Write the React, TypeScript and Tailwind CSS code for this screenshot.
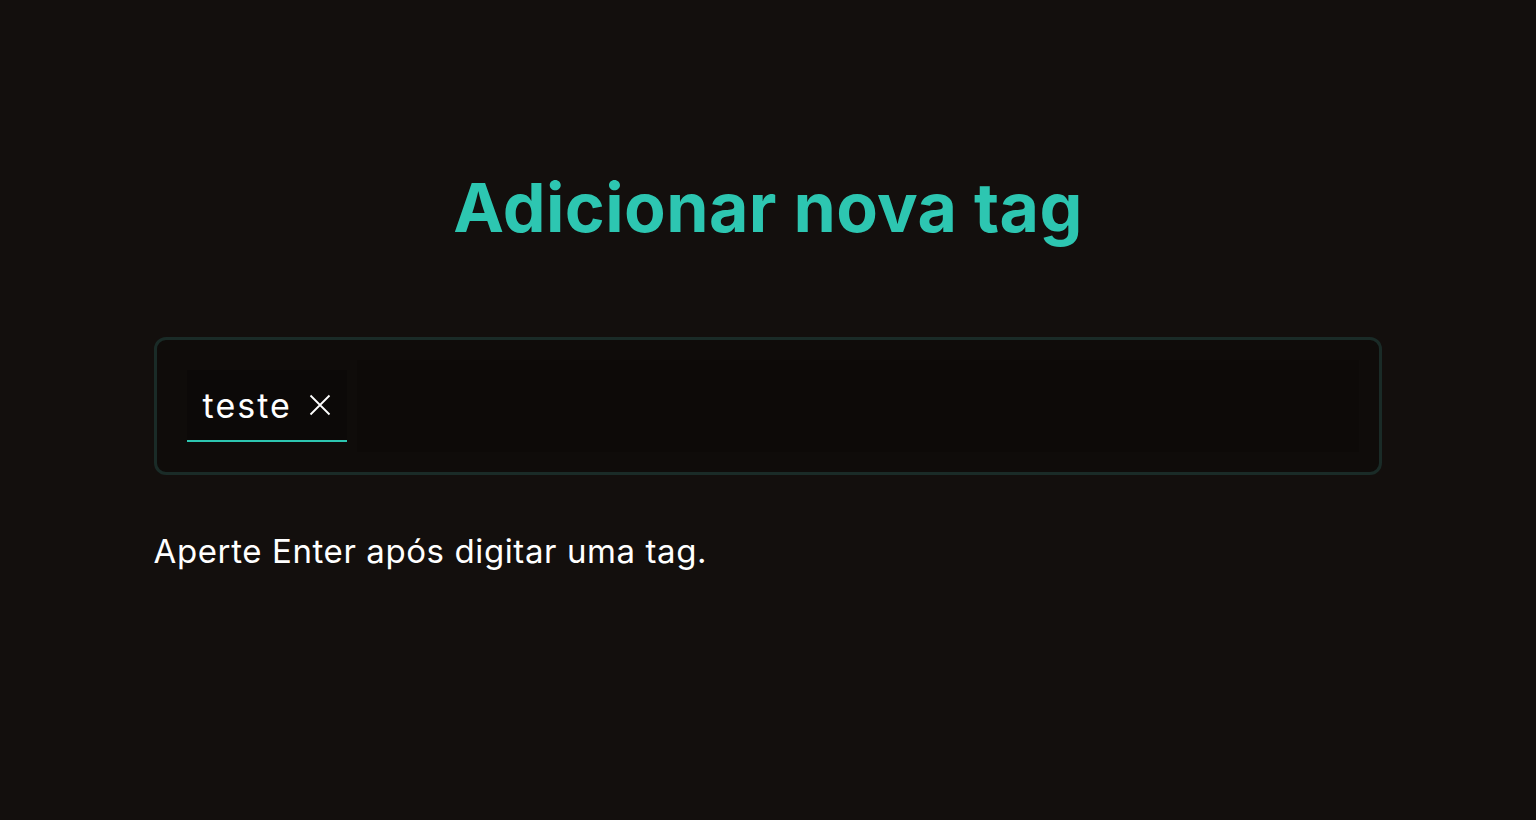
import { useState } from 'react';

const App = () => {
  const [tags, setTags] = useState<string[]>(['teste']);
  const [value, setValue] = useState('');

  const handleKeyDown = (e: React.KeyboardEvent<HTMLInputElement>) => {
    if (e.key === 'Enter' && value.trim()) {
      setTags([...tags, value.trim()]);
      setValue('');
    }
  };

  const removeTag = (tag: string) => {
    setTags(tags.filter((t) => t !== tag));
  };

  return (
    <div className="min-h-[820px] w-full bg-[#130f0d] font-['Inter','Noto_Sans',sans-serif]">
      <div className="mx-auto w-[80%] pt-[167px]">
        <h1 className="text-center text-[68px] font-bold leading-[80px] tracking-[0.4px] text-[#2dc6b1]">
          Adicionar nova tag
        </h1>

        <div className="mt-[90px] flex h-[138px] items-center rounded-[12px] border-[3px] border-[#1a2b27] bg-[#0f0c0a] px-[20px]">
          <div className="flex items-center gap-[10px] pl-[10px] w-full">
            {tags.map((tag) => (
              <div
                key={tag}
                className="flex h-[72px] items-center gap-[17px] border-b-2 border-[#2dc6b1] bg-[#0c0908] pl-[16px] pr-[16px]"
              >
                <span className="text-[34px] tracking-[2px] text-white">{tag}</span>
                <button onClick={() => removeTag(tag)} className="text-white">
                  <svg width="22" height="22" viewBox="0 0 22 22" fill="none" stroke="currentColor" strokeWidth="1.8">
                    <path d="M1.5 1.5L20.5 20.5M20.5 1.5L1.5 20.5" />
                  </svg>
                </button>
              </div>
            ))}
            <input
              value={value}
              onChange={(e) => setValue(e.target.value)}
              onKeyDown={handleKeyDown}
              className="h-[92px] flex-1 bg-[#0d0a08] px-4 text-[32px] text-white outline-none"
            />
          </div>
        </div>

        <p className="mt-[56px] text-[33px] leading-[40px] tracking-[0.6px] text-white">Aperte Enter após digitar uma tag.</p>
      </div>
    </div>
  );
};

export default App;
